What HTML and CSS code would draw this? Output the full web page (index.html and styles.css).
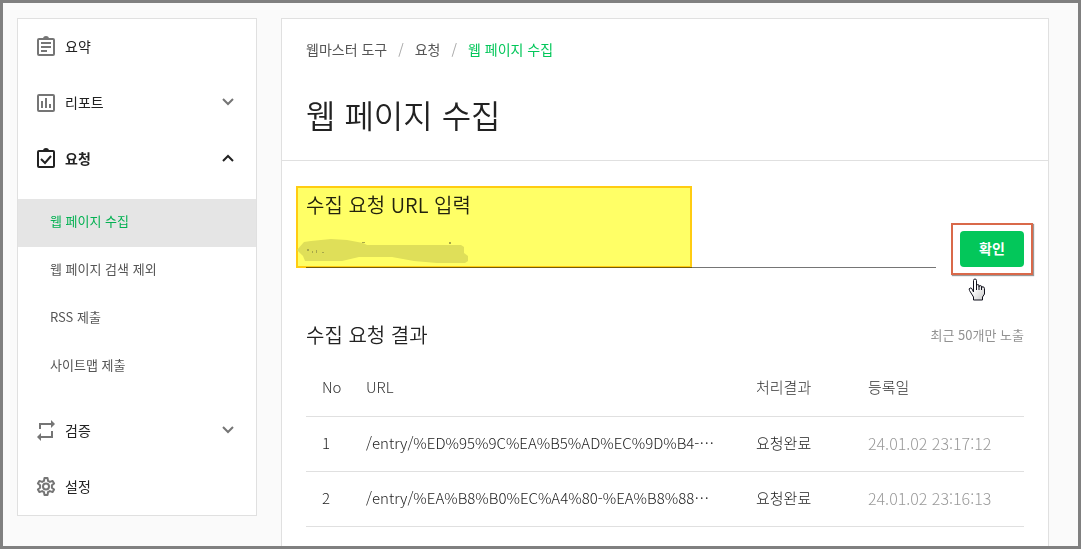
FILE: index.html
```html
<!DOCTYPE html>
<html lang="ko">
<head>
<meta charset="utf-8">
<title>웹 페이지 수집</title>
<link rel="stylesheet" href="styles.css">
</head>
<body>
<div class="frame">
  <nav class="sidebar">
    <a class="item" href="#">
      <svg class="icon" viewBox="0 0 20 22" fill="none" stroke="currentColor" stroke-width="2"><rect x="2" y="4" width="16" height="16" rx="1"/><path d="M5 8h10M5 12h10M5 16h6"/><path d="M7 4a3 3 0 0 1 6 0z" fill="currentColor" stroke="none"/></svg>
      <span>요약</span>
    </a>
    <a class="item" href="#">
      <svg class="icon" viewBox="0 0 20 22" fill="none" stroke="currentColor" stroke-width="2"><rect x="2" y="4" width="16" height="16" rx="1"/><path d="M6 10v7M10 7v10M14 13v4"/></svg>
      <span>리포트</span>
      <svg class="chevron" viewBox="0 0 12 8" fill="none" stroke="currentColor" stroke-width="2"><path d="M1 1l5 5 5-5"/></svg>
    </a>
    <a class="item open" href="#">
      <svg class="icon" viewBox="0 0 20 22" fill="none" stroke="currentColor" stroke-width="2"><rect x="2" y="4" width="16" height="16" rx="1"/><path d="M5 12l4 4 6-7"/><path d="M7 4a3 3 0 0 1 6 0z" fill="currentColor" stroke="none"/></svg>
      <span>요청</span>
      <svg class="chevron" viewBox="0 0 12 8" fill="none" stroke="currentColor" stroke-width="2"><path d="M1 7l5-5 5 5"/></svg>
    </a>
    <div class="submenu">
      <a class="sub current" href="#">웹 페이지 수집</a>
      <a class="sub" href="#">웹 페이지 검색 제외</a>
      <a class="sub" href="#">RSS 제출</a>
      <a class="sub" href="#">사이트맵 제출</a>
    </div>
    <a class="item" href="#">
      <svg class="icon" viewBox="0 0 20 22" fill="none" stroke="currentColor" stroke-width="2"><path d="M4 10V5h12M16 12v6H4"/><path d="M15 1l4 4-4 4zM5 14l-4 4 4 4z" fill="currentColor" stroke="none"/></svg>
      <span>검증</span>
      <svg class="chevron" viewBox="0 0 12 8" fill="none" stroke="currentColor" stroke-width="2"><path d="M1 1l5 5 5-5"/></svg>
    </a>
    <a class="item" href="#">
      <svg class="icon" viewBox="0 0 20 22" fill="none" stroke="currentColor" stroke-width="2" stroke-linejoin="round"><path d="M8.500 3h3l.5 2.800 1.900 1.100 2.700-1 1.500 2.600-2.200 1.800v2.400l2.200 1.800-1.500 2.600-2.700-1-1.900 1.100-.5 2.800h-3L8 17.200l-1.900-1.100-2.700 1-1.500-2.600 2.200-1.800v-2.400L1.900 8.500l1.500-2.600 2.700 1L8 5.800z"/><circle cx="10" cy="11.500" r="3"/></svg>
      <span>설정</span>
    </a>
  </nav>

  <main class="panel">
    <header class="head">
      <nav class="crumbs">
        <a href="#">웹마스터 도구</a><span class="slash">/</span><a href="#">요청</a><span class="slash">/</span><a class="here" href="#">웹 페이지 수집</a>
      </nav>
      <h1>웹 페이지 수집</h1>
    </header>

    <form class="request">
      <div class="field">
        <label for="url">수집 요청 URL 입력</label>
        <input id="url" type="text">
        <div class="highlight">
          <svg class="smudge" viewBox="0 0 172 26"><path d="M0 11L7 3 14 2 34 0 50 1 66 4 70 6H164L167 8V14L171 17V22L168 24H140L117 22 95 18H62L45 22H8L6 17z" fill="#dfdf59"/><path d="M10 10h2v2h-2zM15 12h1v2h-1zM19 11h1v3h-1zM25 13h2v1h-2zM65 3h3v1h-3zM152 3h2v2h-2z" fill="#a8a84a"/></svg>
        </div>
      </div>
      <div class="action">
        <button type="button">확인</button>
        <svg class="pointer" viewBox="0 0 18 23"><defs><linearGradient id="hand" x2="1" y2="1"><stop offset=".4" stop-color="#fff"/><stop offset="1" stop-color="#c8c8c8"/></linearGradient></defs><path d="M5.500 14V2.500q0-1.500 1.500-1.500t1.500 1.500V8q0-1.500 1.300-1.500T11 8v1q0-1.500 1.300-1.500T13.500 9v1q0-1.500 1.500-1.200T16.500 10.500V16L14.500 19v3h-9v-3L1.500 12.500Q.5 10.500 2 10t2 1z" fill="url(#hand)" stroke="#11111c"/><path d="M8.500 8v4M11 9v3M13.500 10v2" stroke="#11111c"/></svg>
      </div>
    </form>

    <section class="results">
      <div class="results-head">
        <h2>수집 요청 결과</h2>
        <span class="note">최근 50개만 노출</span>
      </div>
      <table>
        <thead>
          <tr><th class="no">No</th><th class="url">URL</th><th class="state">처리결과</th><th class="date">등록일</th></tr>
        </thead>
        <tbody>
          <tr><td>1</td><td>/entry/%ED%95%9C%EA%B5%AD%EC%9D%B4-⋯</td><td>요청완료</td><td class="when">24.01.02 23:17:12</td></tr>
          <tr><td>2</td><td>/entry/%EA%B8%B0%EC%A4%80-%EA%B8%88⋯</td><td>요청완료</td><td class="when">24.01.02 23:16:13</td></tr>
        </tbody>
      </table>
    </section>
  </main>
</div>
</body>
</html>
```

FILE: styles.css
```css
* { box-sizing: border-box; }

body {
  margin: 0;
  background: #fafafa;
  color: #222;
  font-family: "Noto Sans CJK KR", "Noto Sans", sans-serif;
  font-size: 14px;
  line-height: 20px;
}

a { color: inherit; text-decoration: none; }

.frame {
  display: flex;
  gap: 24px;
  height: 100vh;
  padding: 15px 29px 0 14px;
  border: 3px solid #808080;
  overflow: hidden;
}

.sidebar {
  flex: 0 0 240px;
  align-self: flex-start;
  background: #fff;
  border: 1px solid #e0e0e0;
}

.item {
  display: flex;
  align-items: center;
  gap: 9px;
  height: 56px;
  padding: 0 22px 2px 18px;
}

.icon { width: 20px; height: 22px; color: #757575; }
.chevron { width: 12px; height: 8px; margin-left: auto; color: #757575; }
.open { font-weight: 700; }
.open .icon, .open .chevron { color: #222; }

.submenu { padding: 12px 0; }

.sub {
  display: flex;
  align-items: center;
  height: 48px;
  padding: 0 32px 4px;
  color: #555;
  font-size: 13px;
}

.current { background: #e5e5e5; color: #03b152; }

.panel {
  flex: 1;
  min-width: 0;
  background: #fff;
  border: 1px solid #e0e0e0;
  border-bottom: 0;
}

.head {
  padding: 20px 24px 22px;
  border-bottom: 1px solid #e0e0e0;
}

.crumbs { display: flex; color: #555; font-size: 14px; }
.slash { padding: 0 11px; color: #aaa; }
.here { color: #03c75a; }

h1 {
  margin: 31px 0 0;
  font-size: 32px;
  font-weight: 350;
  line-height: 48px;
}

.request {
  display: flex;
  align-items: flex-end;
  gap: 24px;
  padding: 29px 24px 0;
}

.field { position: relative; flex: 1; }

.field label, h2 {
  display: block;
  margin: 0;
  font-size: 20px;
  font-weight: 350;
  line-height: 30px;
}

.field input {
  display: block;
  width: 100%;
  height: 48px;
  padding: 0;
  border: 0;
  border-bottom: 1px solid #757575;
  outline: 0;
  background: none;
  font: inherit;
}

.highlight {
  position: absolute;
  inset: -4px auto 0 -10px;
  width: 396px;
  border: 2px solid #fc1;
  background: #ff6;
  mix-blend-mode: multiply;
}

.smudge {
  position: absolute;
  left: -1px;
  bottom: 1px;
  width: 172px;
  height: 26px;
}

.action { position: relative; margin-bottom: 1px; }

.action::before {
  content: "";
  position: absolute;
  inset: -8px -9px;
  border: 2px solid #d9694a;
  box-shadow: 1px 1px 1px #999;
}

.action button {
  position: relative;
  display: block;
  width: 64px;
  height: 36px;
  padding: 0 0 2px;
  border: 0;
  border-radius: 4px;
  background: #03c75a;
  color: #fff;
  font: inherit;
  font-weight: 700;
}

.pointer {
  position: absolute;
  top: 47px;
  left: 8px;
  width: 18px;
  height: 23px;
  fill: none;
}

.results { padding: 52px 24px 0; }

.results-head {
  display: flex;
  align-items: center;
  justify-content: space-between;
}

.note { color: #929292; font-size: 13px; }

table {
  width: 100%;
  margin-top: 8px;
  border-collapse: collapse;
  table-layout: fixed;
  font-size: 15px;
  font-weight: 350;
}

th, td {
  height: 55px;
  padding: 0 0 2px 16px;
  border-bottom: 1px solid #e0e0e0;
  font-weight: 300;
  text-align: left;
  white-space: nowrap;
}

th { height: 58px; padding-bottom: 0; color: #333; }
.no { width: 44px; }
.state { width: 112px; }
.date { width: 172px; }
td.when { color: #999; font-size: 16px; }
```
